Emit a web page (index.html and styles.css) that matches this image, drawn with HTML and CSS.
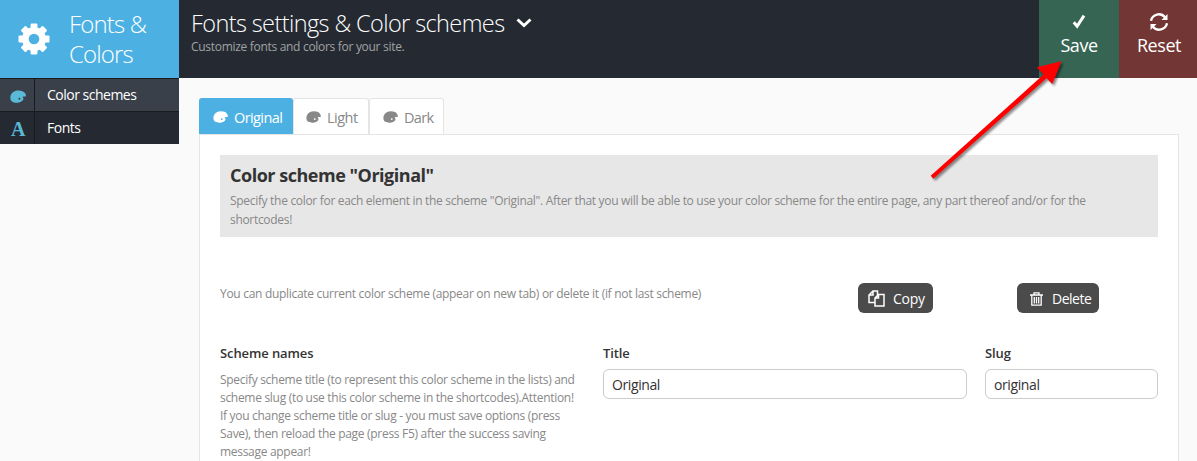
FILE: index.html
```html
<!DOCTYPE html>
<html lang="en">
<head>
<meta charset="utf-8">
<title>Fonts &amp; Colors</title>
<link rel="stylesheet" href="styles.css">
</head>
<body>
<svg class="defs" width="0" height="0">
  <symbol id="palette" viewBox="0 0 16 13">
    <path fill-rule="evenodd" d="M2 11.500C-.8 9 0 4 3.500 1.700 7 -.4 12.800 0 15 3c.9 1.200 1 2.400.8 3.600l-2.300-.2c-.9 0-1.200.7-.6 1.200l.5.6c.3 2-1.600 3.600-4.400 4.300-2.500.6-5.300.3-7-1zM9.400 7.800a1 1 0 1 0 0 2 1 1 0 0 0 0-2z"/>
  </symbol>
</svg>
<div class="page">
  <aside class="side">
    <div class="brand">
      <svg class="gear" viewBox="-16 -16 32 32"><g><rect x="-3.400" y="-15.500" width="6.800" height="31" rx="1"/><rect x="-3.400" y="-15.500" width="6.800" height="31" rx="1" transform="rotate(45)"/><rect x="-3.400" y="-15.500" width="6.800" height="31" rx="1" transform="rotate(90)"/><rect x="-3.400" y="-15.500" width="6.800" height="31" rx="1" transform="rotate(135)"/><circle r="12"/></g><circle class="hole" r="5.300"/></svg>
      <div class="brand-name">Fonts &amp;<br>Colors</div>
    </div>
    <nav>
      <a class="nav-item active"><span class="nav-icon"><svg width="16" height="13"><use href="#palette"/></svg></span><span class="nav-text">Color schemes</span></a>
      <a class="nav-item"><span class="nav-icon letter">A</span><span class="nav-text">Fonts</span></a>
    </nav>
  </aside>
  <div class="main">
    <header class="top">
      <div class="heading">
        <h1><span>Fonts settings &amp; Color schemes</span><svg width="16" height="10" viewBox="0 0 16 10"><path d="M1.500 1.500 8 7.500l6.500-6" fill="none" stroke="#fff" stroke-width="3"/></svg></h1>
        <p>Customize fonts and colors for your site.</p>
      </div>
      <div class="actions">
        <a class="action save"><svg width="20" height="20" viewBox="0 0 20 20"><path d="M4.800 10.200l3.300 4L15 3.600" fill="none" stroke="#fff" stroke-width="3"/></svg><span>Save</span></a>
        <a class="action reset"><svg width="20" height="20" viewBox="0 0 20 20"><path d="M2 8.700A8 8 0 0 1 16 5.300M18 11.300A8 8 0 0 1 4 14.700" fill="none" stroke="#fff" stroke-width="2.400"/><path d="M18.500 2v6h-6zM1.500 18v-6h6z" fill="#fff"/></svg><span>Reset</span></a>
      </div>
    </header>
    <main>
      <div class="tabs">
        <a class="tab on"><svg width="15" height="12"><use href="#palette"/></svg><span>Original</span></a>
        <a class="tab light"><svg width="15" height="12"><use href="#palette"/></svg><span>Light</span></a>
        <a class="tab dark"><svg width="15" height="12"><use href="#palette"/></svg><span>Dark</span></a>
      </div>
      <section class="panel">
        <div class="info">
          <h2>Color scheme "Original"</h2>
          <p class="note info-note">Specify the color for each element in the scheme "Original". After that you will be able to use your color scheme for the entire page, any part thereof and/or for the<br>shortcodes!</p>
        </div>
        <div class="tools">
          <p class="note">You can duplicate current color scheme (appear on new tab) or delete it (if not last scheme)</p>
          <button class="btn copy"><svg width="17" height="17" viewBox="0 0 17 17"><path d="M6.500 12.500H1V5L5 1h4.500v4M5 1v4H1M7 8l3.500-3.500H16V16H7zM10.500 4.500V8H7" fill="none" stroke="#fff" stroke-width="1.500"/></svg><span>Copy</span></button>
          <button class="btn delete"><svg width="13" height="14" viewBox="0 0 13 14"><path d="M0 3h13M4 3V.8h5V3M1.800 3v10.200h9.400V3M4.300 5v6.500M6.500 5v6.500M8.700 5v6.500" fill="none" stroke="#fff" stroke-width="1.300"/></svg><span>Delete</span></button>
        </div>
        <div class="fields">
          <div class="names">
            <h3>Scheme names</h3>
            <p class="note names-note">Specify scheme title (to represent this color scheme in the lists) and<br>scheme slug (to use this color scheme in the shortcodes).Attention!<br>If you change scheme title or slug - you must save options (press<br>Save), then reload the page (press F5) after the success saving<br>message appear!</p>
          </div>
          <label><span class="label">Title</span><input value="Original"></label>
          <label><span class="label">Slug</span><input value="original"></label>
        </div>
      </section>
    </main>
  </div>
</div>
<svg class="pointer" width="150" height="140" viewBox="920 50 150 140"><path d="M930.700 175.700 1043.600 74.600 1036.700 67.300 1061.500 61.300 1052.300 84 1046.600 78.200 933.300 178.700Z"/></svg>
</body>
</html>
```
FILE: styles.css
```css
* { box-sizing: border-box; }
body { margin: 0; background: #fafafa; font-family: "Open Sans", "Noto Sans", sans-serif; color: #333; width: 1197px; height: 461px; overflow: hidden; }
h1, h2, h3, p { margin: 0; font-weight: 400; white-space: nowrap; }
.defs { display: block; }
.page { display: flex; height: 461px; overflow: hidden; }
.side { width: 179px; flex: none; }
.brand { height: 78px; background: #4cb1e2; color: #fff; display: flex; }
.gear { width: 32px; height: 32px; margin: 23px 19px 0 18px; fill: #fff; }
.gear .hole { fill: #4cb1e2; }
.brand-name { font-size: 24px; font-weight: 300; line-height: 30px; padding-top: 9px; letter-spacing: -.85px; }
.nav-item { display: flex; height: 33px; background: #252a32; color: #fff; border-top: 1px solid #171a1e; font-size: 14px; }
.nav-item.active { background: #3a404a; }
.nav-icon { width: 35px; border-right: 1px solid #171a1e; color: #5bb9d8; fill: #5bb9d8; padding: 11px 0 0 10px; }
.nav-icon svg { display: block; }
.letter { font: bold 20px/22px "Liberation Serif", serif; padding: 6px 0 0 11px; }
.nav-text { line-height: 32px; padding-left: 12px; letter-spacing: -.5px; }
.main { flex: 1; }
.top { height: 78px; background: #252a32; display: flex; justify-content: space-between; }
.heading { padding: 7px 0 0 12px; }
h1 { display: flex; align-items: center; font-size: 23.500px; line-height: 32px; font-weight: 300; color: #fff; gap: 12px; letter-spacing: -.6px; }
.heading p { font-size: 12px; line-height: 16px; color: #a0a2a5; letter-spacing: -.3px; }
.actions { display: flex; }
.action { width: 80px; display: flex; flex-direction: column; align-items: center; padding-top: 12px; color: #fff; font-size: 18px; line-height: 26px; letter-spacing: -.45px; }
.save { background: #366554; }
.reset { width: 78px; background: #723634; padding-left: 2px; }
main { padding: 20px 18px 0 20px; }
.tabs { display: flex; height: 36px; }
.tab { width: 94px; height: 36px; border: 1px solid #e5e5e5; border-bottom: 0; border-radius: 3px 3px 0 0; background: #fff; color: #888; fill: #888; display: flex; align-items: center; gap: 6px; padding: 1px 0 0 13px; font-size: 14.500px; letter-spacing: -.6px; }
.tab.on { background: #4cb1e2; border-color: #4cb1e2; color: #fff; fill: #fff; }
.tab.light { width: 76px; padding-left: 12px; letter-spacing: -.5px; }
.tab.dark { width: 75px; letter-spacing: -.7px; }
.panel { height: 400px; background: #fff; border: 1px solid #e5e5e5; padding: 20px; width: 980px; }
.info { height: 82px; width: 938px; background: #e7e7e7; padding: 7px 10px; }
h2 { font-size: 18px; font-weight: 700; line-height: 26px; letter-spacing: -.48px; }
.note { font-size: 12px; line-height: 18px; color: #888; letter-spacing: -.3px; }
.info-note { line-height: 19px; padding-top: 3px; letter-spacing: -.31px; }
.tools { margin-top: 46px; height: 30px; display: flex; }
.tools .note { width: 638px; padding-top: 2px; }
.btn { font: 14px "Open Sans", sans-serif; letter-spacing: -.3px; color: #fff; background: #4b4b4b; border: 0; border-radius: 6px; height: 30px; padding: 1px 0 0 10px; display: flex; align-items: center; gap: 8px; }
.copy { width: 75px; }
.delete { width: 82px; margin-left: 84px; padding-left: 13px; gap: 9px; letter-spacing: -.5px; }
.fields { display: grid; grid-template-columns: 365px 364px 173px; gap: 18px; padding-top: 30px; }
h3, .label { display: block; font-size: 13px; line-height: 20px; font-weight: 600; letter-spacing: -.1px; }
.names-note { padding-top: 8px; }
input { display: block; width: 100%; height: 30px; margin-top: 6px; border: 1px solid #ccc; border-radius: 6px; background: #fff; padding: 1px 8px 0; font: 14px "Open Sans", sans-serif; color: #333; letter-spacing: -.4px; }
.pointer { position: absolute; left: 920px; top: 50px; fill: #f00; filter: drop-shadow(2px 2px 1px rgba(0,0,0,.45)); }
```
